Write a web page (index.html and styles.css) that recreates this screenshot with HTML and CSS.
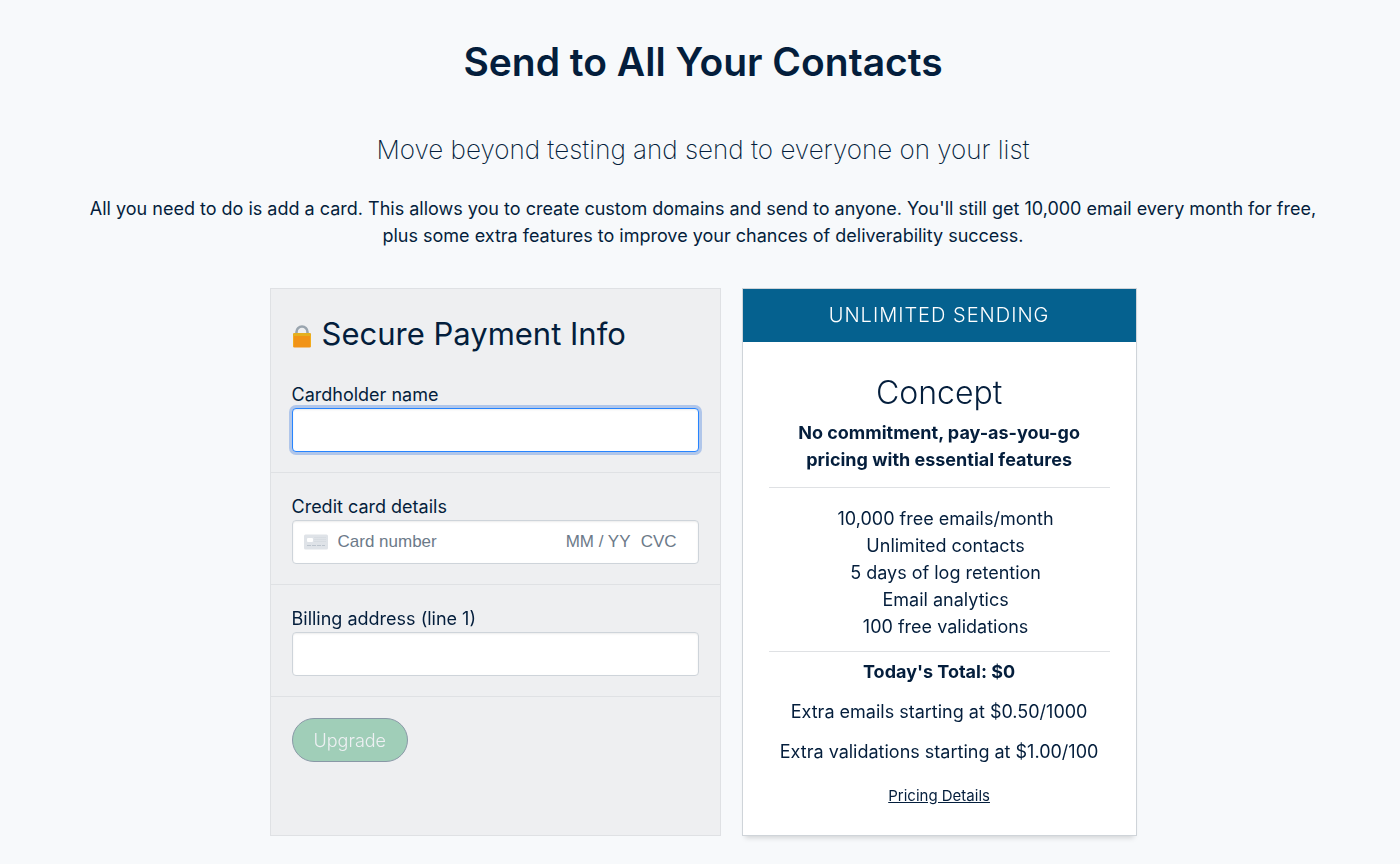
FILE: index.html
```html
<!DOCTYPE html>
<html lang="en">
<head>
  <meta charset="UTF-8">
  <meta name="viewport" content="width=device-width, initial-scale=1.0">
  <title>Send to All Your Contacts</title>
  <link rel="stylesheet" href="styles.css">
</head>
<body>
  <main class="page">
    <header class="intro">
      <h1>Send to All Your Contacts</h1>
      <h2>Move beyond testing and send to everyone on your list</h2>
      <p>All you need to do is add a card. This allows you to create custom domains and send to anyone. You'll still get 10,000 email every month for free, plus some extra features to improve your chances of deliverability success.</p>
    </header>

    <div class="columns">
      <form class="payment">
        <div class="group">
          <h3>
            <svg class="lock" viewBox="0 0 20 24" aria-hidden="true">
              <path d="M4.500 11V8a5.500 5.500 0 0 1 11 0v3" fill="none" stroke="#9aa5af" stroke-width="2.600"/>
              <rect x="1" y="9" width="18" height="14.500" rx="1.500" fill="#f19317"/>
              <path d="M1 12V10.500q0-1.500 1.500-1.500h15q1.500 0 1.500 1.500v1.500z" fill="#e5b01f"/>
              <path d="M1.500 12v10M18.500 12v10" stroke="#f2ac1c"/>
            </svg>
            Secure Payment Info
          </h3>
          <label for="name">Cardholder name</label>
          <input class="field" type="text" id="name" name="name" autofocus>
        </div>

        <div class="group">
          <label for="card">Credit card details</label>
          <div class="field card-field">
            <svg class="card-icon" viewBox="0 0 24 16" aria-hidden="true">
              <rect y="0.500" width="24" height="15" rx="1.500" fill="#dfe3e8"/>
              <rect x="3" y="4" width="6" height="4" rx="1" fill="#fff"/>
              <path d="M3 11.500h4M8 11.500h4M13 11.500h4M18 11.500h3" stroke="#bcc4cd"/>
              <path d="M11 3v6M13 3v6M15 3v6M17 3v6M19 3v6M21 3v6" stroke="#d0d6dc" stroke-dasharray="1 1"/>
            </svg>
            <input class="number" type="text" id="card" name="card" placeholder="Card number">
            <input class="expiry" type="text" name="expiry" placeholder="MM / YY" aria-label="Expiry date">
            <input class="cvc" type="text" name="cvc" placeholder="CVC" aria-label="CVC">
          </div>
        </div>

        <div class="group">
          <label for="address">Billing address (line 1)</label>
          <input class="field" type="text" id="address" name="address">
        </div>

        <div class="group">
          <button type="submit" disabled>Upgrade</button>
        </div>
      </form>

      <section class="plan">
        <div class="plan-banner">Unlimited Sending</div>
        <div class="plan-body">
          <h3>Concept</h3>
          <p class="tagline">No commitment, pay-as-you-go pricing with essential features</p>
          <ul>
            <li>10,000 free emails/month</li>
            <li>Unlimited contacts</li>
            <li>5 days of log retention</li>
            <li>Email analytics</li>
            <li>100 free validations</li>
          </ul>
          <p class="total">Today's Total: $0</p>
          <p>Extra emails starting at $0.50/1000</p>
          <p>Extra validations starting at $1.00/100</p>
          <a href="#pricing">Pricing Details</a>
        </div>
      </section>
    </div>
  </main>

  <script>
    document.getElementById("name").focus();
  </script>
</body>
</html>
```
FILE: styles.css
```css
:root {
  --bg: #f7f9fb;
  --panel: #eeeff1;
  --line: #dfe1e4;
  --navy: #041e3c;
  --blue: #05618f;
}

* {
  box-sizing: border-box;
  margin: 0;
  padding: 0;
}

body {
  font-family: Inter, sans-serif;
  font-size: 18px;
  line-height: 27px;
  color: var(--navy);
  background-color: var(--bg);
}

.page {
  padding: 38px 76px 27px 82px;
}

.intro {
  text-align: center;
}

h1 {
  font-size: 39px;
  line-height: 48px;
  font-weight: 600;
}

h2 {
  margin: 48px 0 29px;
  font-size: 26px;
  line-height: 32px;
  font-weight: 200;
}

.columns {
  display: grid;
  grid-template-columns: 8fr 7fr;
  gap: 21px;
  max-width: 867px;
  margin: 39px auto 0;
}

/* payment form */
.payment {
  background-color: var(--panel);
  border: 1px solid var(--line);
}

.group {
  padding: 20px 21px;
}

.group + .group {
  border-top: 1px solid var(--line);
}

.group:last-child {
  padding-top: 21px;
}

.payment h3 {
  display: flex;
  align-items: center;
  gap: 10px;
  margin-bottom: 23px;
  padding-top: 1px;
  font-size: 31px;
  line-height: 48px;
  font-weight: 400;
}

.lock {
  width: 20px;
  height: 24px;
  margin-top: 4px;
}

label {
  display: block;
}

.field {
  display: block;
  width: 100%;
  height: 44px;
  padding: 0 11px;
  font: inherit;
  color: var(--navy);
  background-color: #fff;
  border: 1px solid #ced4da;
  border-radius: 4px;
  box-shadow: inset 0 1px 2px rgba(0, 0, 0, 0.08);
  outline: none;
}

input.field:focus {
  border-color: #2684ff;
  box-shadow: inset 0 1px 2px rgba(0, 0, 0, 0.08), 0 0 0 3px #b0c6ea;
}

.card-field {
  display: flex;
  align-items: center;
  padding-right: 18px;
}

.card-field input {
  min-width: 0;
  font-family: "Liberation Sans", sans-serif;
  font-size: 17px;
  color: var(--navy);
  background: none;
  border: none;
  outline: none;
}

.card-field input::placeholder {
  color: #6c7a89;
  opacity: 1;
}

.card-icon {
  width: 24px;
  height: 16px;
  margin-right: 10px;
}

.number {
  flex: 1;
}

.expiry {
  width: 75px;
}

.cvc {
  width: 39px;
}

button {
  height: 44px;
  padding: 0 21px;
  font: inherit;
  font-weight: 300;
  color: #eef0f3;
  background-color: #a0ceb8;
  border: 1px solid #8998a6;
  border-radius: 22px;
}

/* plan summary */
.plan {
  text-align: center;
  background-color: #fff;
  border: 1px solid #cfd4d9;
  box-shadow: 0 5px 5px -3px rgba(0, 0, 0, 0.15);
}

.plan-banner {
  padding: 12px 0 13px;
  font-size: 20px;
  line-height: 28px;
  font-weight: 300;
  letter-spacing: 1px;
  text-transform: uppercase;
  color: #fff;
  background-color: var(--blue);
}

.plan-body {
  padding: 27px 26px 26px;
}

.plan-body h3 {
  font-size: 32px;
  line-height: 48px;
  font-weight: 300;
}

.tagline {
  padding: 2px 20px 14px;
  font-weight: 700;
}

.plan-body ul {
  padding: 17px 0 11px 13px;
  list-style: none;
  border-top: 1px solid var(--line);
  border-bottom: 1px solid var(--line);
}

.plan-body ul + .total {
  padding-top: 6px;
  font-weight: 700;
}

.total,
.total ~ p {
  margin-bottom: 13px;
}

.plan-body a {
  display: inline-block;
  margin-top: 4px;
  font-size: 15px;
  color: var(--navy);
}
```
